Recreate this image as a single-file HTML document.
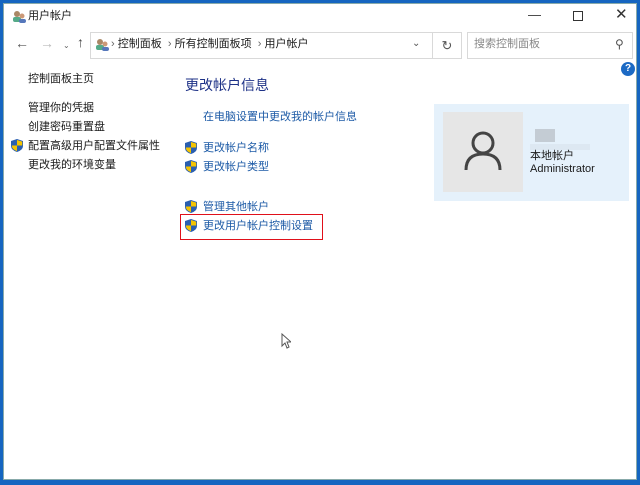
<!DOCTYPE html>
<html><head><meta charset="utf-8"><style>
*{margin:0;padding:0;box-sizing:border-box}
body{width:640px;height:485px;background:#1565c0;position:relative;overflow:hidden;font-family:"Liberation Sans","Noto Sans CJK SC",sans-serif;font-size:11px;color:#1a1a1a}
.win{position:absolute;left:3px;top:3px;width:634px;height:477px;background:#fff;border:1px solid #8aa}
.a{position:absolute;white-space:nowrap;line-height:14px}
.lnk{color:#1c5aa6}
.sh{position:absolute;width:12px;height:13px}
</style></head><body>
<div class="win">
<svg class="a" style="left:8px;top:6px" width="14" height="13"><circle cx="5" cy="4" r="3" fill="#a86"/><rect x="1" y="7" width="8" height="5" rx="2" fill="#5a8"/><circle cx="10" cy="6" r="2.5" fill="#c97"/><rect x="7" y="9" width="7" height="4" rx="2" fill="#57b"/></svg>
<div class="a" style="left:24px;top:5px;font-size:11px">用户帐户</div>
<div class="a" style="left:524px;top:4px;font-size:13px;color:#333">—</div>
<div class="a" style="left:569px;top:7px;width:10px;height:10px;border:1px solid #333"></div>
<div class="a" style="left:611px;top:4px;font-size:15px;color:#333">✕</div>
<div class="a" style="left:11px;top:32px;font-size:14px;color:#555">←</div>
<div class="a" style="left:36px;top:32px;font-size:14px;color:#bbb">→</div>
<div class="a" style="left:59px;top:35px;font-size:8px;color:#666">⌄</div>
<div class="a" style="left:73px;top:31px;font-size:14px;color:#444">↑</div>
<div class="a" style="left:86px;top:28px;width:343px;height:27px;border:1px solid #d9d9d9"></div>
<div class="a" style="left:428px;top:28px;width:30px;height:27px;border:1px solid #d9d9d9;text-align:center;line-height:25px;font-size:13px;color:#555">↻</div>
<svg class="a" style="left:91px;top:34px" width="14" height="13"><circle cx="5" cy="4" r="3" fill="#a86"/><rect x="1" y="7" width="8" height="5" rx="2" fill="#5a8"/><circle cx="10" cy="6" r="2.5" fill="#c97"/><rect x="7" y="9" width="7" height="4" rx="2" fill="#57b"/></svg>
<div class="a" style="left:107px;top:33px;font-size:11px"><span style="color:#666">›</span> 控制面板 <span style="color:#666">&nbsp;›</span> 所有控制面板项 <span style="color:#666">&nbsp;›</span> 用户帐户</div>
<div class="a" style="left:408px;top:33px;font-size:10px;color:#555">⌄</div>
<div class="a" style="left:463px;top:28px;width:166px;height:27px;border:1px solid #d9d9d9"></div>
<div class="a" style="left:470px;top:33px;color:#888">搜索控制面板</div>
<div class="a" style="left:611px;top:33px;font-size:12px;color:#555">⚲</div>
<div class="a" style="left:617px;top:58px;width:14px;height:14px;border-radius:50%;background:#1c6ac4;color:#fff;font-size:10px;font-weight:bold;text-align:center;line-height:14px">?</div>
<div class="a" style="left:24px;top:68px">控制面板主页</div>
<div class="a" style="left:24px;top:97px">管理你的凭据</div>
<div class="a" style="left:24px;top:116px">创建密码重置盘</div>
<div class="a" style="left:24px;top:135px">配置高级用户配置文件属性</div>
<div class="a" style="left:24px;top:154px">更改我的环境变量</div>
<div class="a" style="left:181px;top:72px;font-size:14px;line-height:18px;color:#1e3287">更改帐户信息</div>
<div class="a lnk" style="left:199px;top:106px">在电脑设置中更改我的帐户信息</div>
<div class="a lnk" style="left:199px;top:137px">更改帐户名称</div>
<div class="a lnk" style="left:199px;top:156px">更改帐户类型</div>
<div class="a lnk" style="left:199px;top:196px">管理其他帐户</div>
<div class="a lnk" style="left:199px;top:215px">更改用户帐户控制设置</div>
<div class="a" style="left:176px;top:210px;width:143px;height:26px;border:1.5px solid #e0101a"></div>
<svg width="0" height="0" style="position:absolute"><defs><g id="s"><path d="M6 0 L12 2 V7 Q12 11 6 13 Q0 11 0 7 V2 Z" fill="#2a5fb0"/><path d="M6 1 V6.5 H11.2 V2.6 Z" fill="#f5c400"/><path d="M6 6.5 H0.8 Q1 10.5 6 12.2 Z" fill="#f5c400"/></g></defs></svg>
<svg class="sh" style="left:7px;top:135px"><use href="#s"/></svg>
<svg class="sh" style="left:181px;top:137px"><use href="#s"/></svg>
<svg class="sh" style="left:181px;top:156px"><use href="#s"/></svg>
<svg class="sh" style="left:181px;top:196px"><use href="#s"/></svg>
<svg class="sh" style="left:181px;top:215px"><use href="#s"/></svg>
<div class="a" style="left:430px;top:100px;width:195px;height:97px;background:#e5f1fb"></div>
<div class="a" style="left:439px;top:108px;width:80px;height:80px;background:#e6e6e6"></div>
<svg class="a" style="left:459px;top:126px" width="40" height="42"><circle cx="20" cy="13" r="10" fill="none" stroke="#444" stroke-width="3"/><path d="M3 40 Q3 24 20 24 Q37 24 37 40" fill="none" stroke="#444" stroke-width="3"/></svg>
<div class="a" style="left:531px;top:125px;width:20px;height:13px;background:#c4ccd4"></div>
<div class="a" style="left:526px;top:140px;width:60px;height:6px;background:#dde8f2"></div>
<div class="a" style="left:526px;top:145px">本地帐户</div>
<div class="a" style="left:526px;top:158px">Administrator</div>
<svg class="a" style="left:277px;top:329px" width="10" height="16"><path d="M1 1 V13 L4 10 L6 15 L8 14 L6 9 H10 Z" fill="#fff" stroke="#555" stroke-width="1"/></svg>
</div>
</body></html>
